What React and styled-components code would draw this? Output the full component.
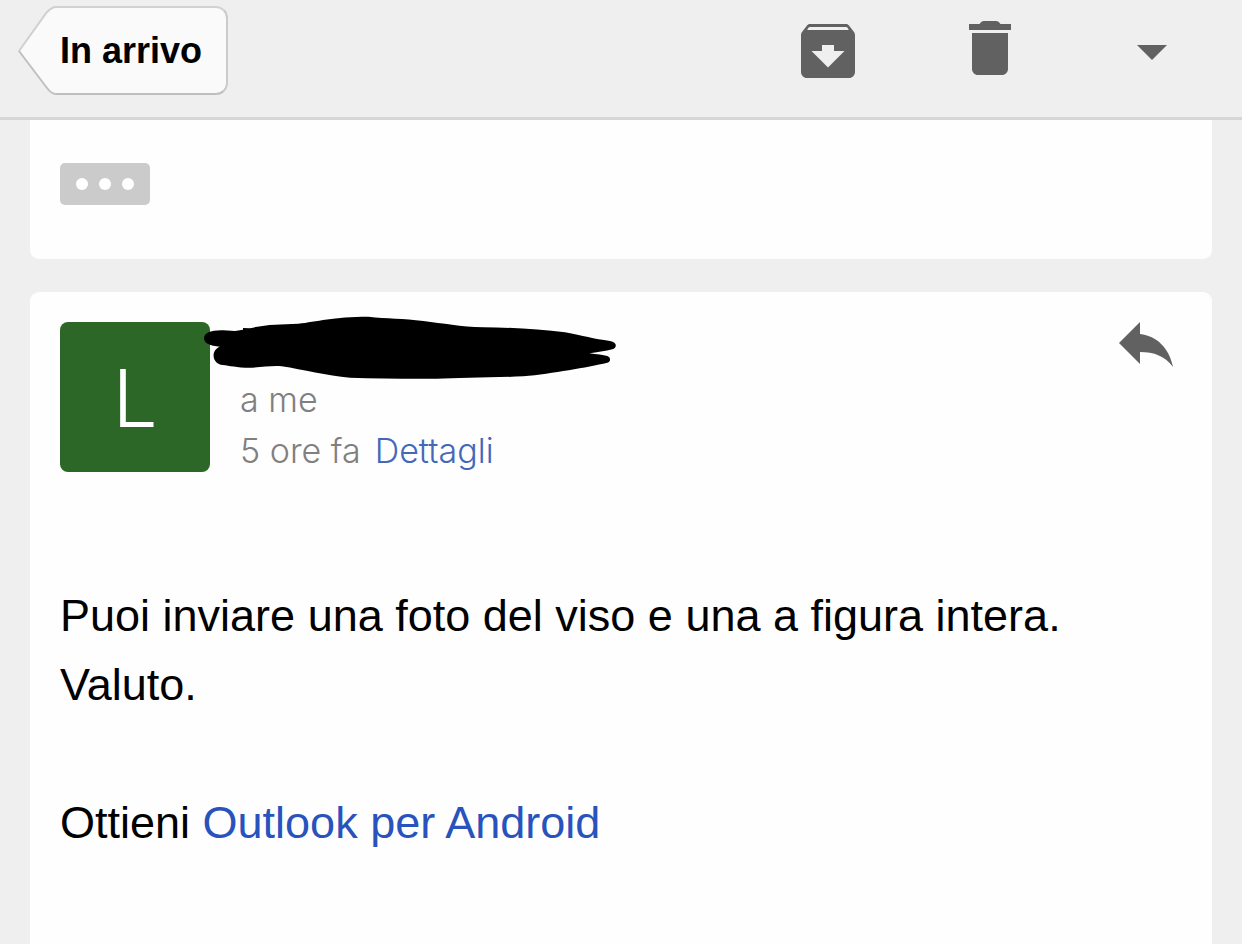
import React from 'react';
import styled, { createGlobalStyle } from 'styled-components';

const GlobalStyle = createGlobalStyle`
  * {
    box-sizing: border-box;
  }

  html, body, #root {
    height: 100%;
  }

  body {
    margin: 0;
    background: #efefef;
    color: #000;
    font-family: "Liberation Sans", Arial, Helvetica, sans-serif;
  }
`;

const Page = styled.div`
  display: flex;
  flex-direction: column;
  min-height: 100%;
`;

const Toolbar = styled.header`
  display: flex;
  align-items: flex-start;
  justify-content: space-between;
  height: 120px;
  padding: 6px 9px 0 18px;
  border-bottom: 3px solid #d6d6d6;
`;

const BackButton = styled.button`
  display: flex;
  height: 89px;
  padding: 0;
  border: 0;
  background: none;
  color: #000;
  font: bold 36px "Liberation Sans", Arial, sans-serif;
  cursor: pointer;
`;

const BackTip = styled.svg`
  display: block;
  width: 38px;
  height: 89px;
`;

const BackLabel = styled.span`
  display: flex;
  align-items: center;
  height: 89px;
  padding: 0 24px 0 4px;
  border: 2px solid #cbcbcb;
  border-top-color: #d2d2d2;
  border-bottom-color: #bfbfbf;
  border-left: 0;
  border-radius: 0 12px 12px 0;
  background: #fafafa;
`;

const Actions = styled.div`
  display: flex;
`;

const ActionButton = styled.button`
  display: flex;
  justify-content: center;
  width: 162px;
  padding: 9px 0 0;
  border: 0;
  background: none;
  color: #616161;
  cursor: pointer;
`;

const Icon = styled.svg`
  display: block;
  width: 72px;
  height: 72px;
  fill: currentColor;
`;

const Thread = styled.main`
  display: flex;
  flex: 1;
  flex-direction: column;
  gap: 33px;
  padding: 0 30px;
`;

const Card = styled.article`
  flex: ${({ $grow }) => ($grow ? '1' : 'none')};
  padding: ${({ $grow }) => ($grow ? '30px' : '43px 30px 54px')};
  border-radius: ${({ $grow }) => ($grow ? '9px 9px 0 0' : '0 0 9px 9px')};
  background: #fefefe;
`;

const MoreButton = styled.button`
  display: flex;
  align-items: center;
  justify-content: center;
  gap: 11px;
  width: 90px;
  height: 42px;
  padding: 0;
  border: 0;
  border-radius: 5px;
  background: #cbcbcb;
  cursor: pointer;
`;

const Dot = styled.span`
  width: 12px;
  height: 12px;
  border-radius: 50%;
  background: #fff;
`;

const MailHeader = styled.div`
  display: flex;
  align-items: flex-start;
  gap: 30px;
  margin-bottom: 105px;
`;

const Avatar = styled.div`
  display: flex;
  align-items: center;
  justify-content: center;
  width: 150px;
  height: 150px;
  border-radius: 8px;
  background: #2d6728;
  color: #fff;
  font-family: Inter, Roboto, sans-serif;
  font-size: 80px;
  font-weight: 300;
`;

const Meta = styled.div`
  flex: 1;
  color: #808080;
  font-family: Inter, Roboto, sans-serif;
  font-size: 34px;
  font-weight: 300;
  line-height: 51px;
`;

const Sender = styled.div`
  position: relative;
  height: 52px;
`;

// the marker runs over the avatar's corner
const Marker = styled.svg`
  position: absolute;
  top: -6px;
  left: -36px;
  width: 413px;
  height: 64px;
`;

const DetailsLink = styled.a`
  margin-left: 14px;
  color: #4468b8;
  text-decoration: none;
`;

const ReplyButton = styled.button`
  padding: 0 9px 0 0;
  border: 0;
  background: none;
  color: #616161;
  cursor: pointer;
`;

const ReplyIcon = styled.svg`
  display: block;
  width: 54px;
  height: 45px;
  fill: currentColor;
`;

const Body = styled.div`
  font-size: 45px;
  line-height: 69px;

  p {
    margin: 0 0 69px;
  }

  a {
    color: #2853bd;
    text-decoration: none;
  }
`;

const actions = [
  {
    label: 'Archivia',
    path: 'M20.54 5.5l-1.5-1.95C18.78 3.21 18.47 3 18 3H6c-.47 0-.8.21-1.05.55L3.46 5.5C3.17 5.87 3 6.22 3 6.7V19c0 1.1.9 2 2 2h14c1.1 0 2-.9 2-2V6.7c0-.48-.17-.83-.46-1.2zM12 17.5L6.5 12H10v-2h4v2h3.5L12 17.5zM5.1 5c.2-.6.5-1 .9-1h12c.4 0 .7.4.9 1H5.1z',
  },
  {
    label: 'Elimina',
    path: 'M6 18c0 1.1.9 2 2 2h8c1.1 0 2-.9 2-2V6H6v12zM19 3h-3.5c-.5-.6-.8-1-1.5-1h-4c-.7 0-1 .4-1.5 1H5v2h14V3z',
  },
  { label: 'Altro', path: 'M7 10l5 5 5-5z' },
];

function App() {
  return (
    <Page>
      <GlobalStyle />

      <Toolbar>
        <BackButton>
          <BackTip viewBox="0 0 38 89" aria-hidden="true">
            <path d="M38 1C34 1 32 3 29 6L1 45L29 82C32 86 34 88 38 88Z" fill="#fafafa" />
            <path d="M38 1C34 1 32 3 29 6L1 45" fill="none" stroke="#d0d0d0" strokeWidth="2" />
            <path d="M1 45L29 82C32 86 34 88 38 88" fill="none" stroke="#c0c0c0" strokeWidth="2" />
          </BackTip>
          <BackLabel>In arrivo</BackLabel>
        </BackButton>

        <Actions>
          {actions.map((action) => (
            <ActionButton key={action.label} aria-label={action.label}>
              <Icon viewBox="0 0 24 24">
                <path fillRule="evenodd" d={action.path} />
              </Icon>
            </ActionButton>
          ))}
        </Actions>
      </Toolbar>

      <Thread>
        <Card>
          <MoreButton aria-label="Mostra testo citato">
            <Dot />
            <Dot />
            <Dot />
          </MoreButton>
        </Card>

        <Card $grow>
          <MailHeader>
            <Avatar>L</Avatar>
            <Meta>
              <Sender>
                <Marker viewBox="42 48 1239 192" aria-hidden="true">
                  <path d="M42 115C43 98 62 90 100 91L135 93L159 89V84L180 85C225 73 270 73 325 71C380 65 430 50 535 50C590 57 640 54 700 63C760 70 810 80 880 82C960 82 1050 88 1125 97C1180 107 1210 117 1260 123C1280 126 1282 141 1270 147C1245 153 1220 157 1198 160C1220 163 1240 165 1252 168C1264 173 1262 185 1252 188C1190 202 1090 220 1000 229C900 233 800 234 740 236C650 237 560 235 480 233C410 227 340 209 275 199C240 196 210 204 165 203C130 201 110 195 92 194C64 187 64 148 90 140C60 138 42 130 42 115Z" />
                </Marker>
              </Sender>
              <div>a me</div>
              <div>
                5 ore fa
                <DetailsLink href="#dettagli">Dettagli</DetailsLink>
              </div>
            </Meta>
            <ReplyButton aria-label="Rispondi">
              <ReplyIcon viewBox="0 0 54 45">
                <path d="M0 21L21 0V12C38 14 50 26 54 45C46 34 35 30 21 30V42Z" />
              </ReplyIcon>
            </ReplyButton>
          </MailHeader>

          <Body>
            <p>
              Puoi inviare una foto del viso e una a figura intera.
              <br />
              Valuto.
            </p>
            <div>
              Ottieni <a href="#outlook">Outlook per Android</a>
            </div>
          </Body>
        </Card>
      </Thread>
    </Page>
  );
}

export default App;
